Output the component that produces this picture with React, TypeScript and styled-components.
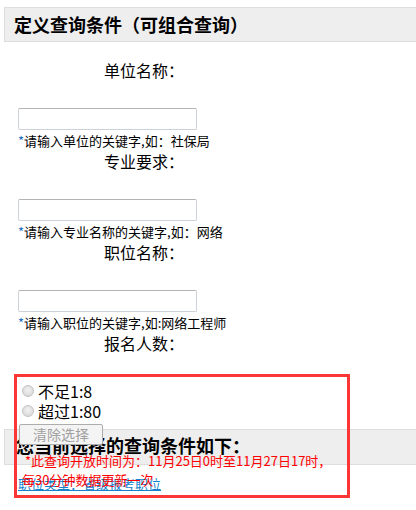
import React from "react";
import styled, { createGlobalStyle } from "styled-components";

const GlobalStyle = createGlobalStyle`
  html, body {
    margin: 0;
    padding: 0;
    background: #fff;
  }
  body {
    font-family: "Noto Sans CJK SC", "Liberation Sans", sans-serif;
    color: #000;
    overflow: hidden;
  }
`;

const Page = styled.div`
  width: 416px;
  min-height: 510px;
  box-sizing: border-box;
  padding: 7px 0 0 4px;
`;

const SectionTitle = styled.h3`
  margin: 0;
  height: 35px;
  box-sizing: border-box;
  background: #eee;
  border: 1px solid #ddd;
  border-right: none;
  padding-left: 9px;
  font-size: 18px;
  font-weight: bold;
  line-height: 32px;
  white-space: nowrap;
`;

const Form = styled.div`
  margin-top: 18px;
`;

const Field = styled.div`
  display: flex;
  flex-direction: column;
  align-items: flex-start;
`;

const Label = styled.div<{ $gap?: number }>`
  width: 280px;
  height: ${(p) => p.$gap ?? 48}px;
  text-align: center;
  font-size: 16px;
  line-height: 20px;
`;

const TextInput = styled.input`
  margin: 0 0 0 14px;
  width: 179px;
  height: 22px;
  box-sizing: border-box;
  border: 1px solid #cdd1d8;
  border-top-color: #b4b4b4;
  border-radius: 2px;
  padding: 0 3px;
  outline: none;
`;

const Hint = styled.div`
  padding-left: 14px;
  font-size: 13px;
  line-height: 21px;
  white-space: nowrap;
`;

const Star = styled.span`
  color: #1a6fc2;
`;

const Result = styled.div`
  position: relative;
  margin-top: 21px;
  padding-top: 7px;
  height: 124px;
`;

const RadioGroup = styled.div`
  position: relative;
  z-index: 1;
  height: 48px;
  padding-left: 18px;
`;

const RadioRow = styled.label`
  display: flex;
  align-items: center;
  gap: 4px;
  height: 20px;
  font-size: 16px;
  white-space: nowrap;
`;

const Radio = styled.input`
  appearance: none;
  margin: 0;
  width: 12px;
  height: 12px;
  border-radius: 50%;
  border: 1px solid #c4c4c4;
  background: radial-gradient(circle at 50% 40%, #f2f2f2, #d2d2d2);
`;

const ClearButton = styled.button`
  margin: 1px 0 0 -3px;
  height: 21px;
  padding: 0 13px;
  font-family: inherit;
  font-size: 14px;
  line-height: 19px;
  color: #a0a0a0;
  background: #f4f4f4;
  border: 1px solid #adadad;
  border-radius: 2px;
`;

const CurrentTitle = styled(SectionTitle)`
  height: 36px;
  padding-left: 11px;
  line-height: 30px;
`;

const Notice = styled.div`
  position: absolute;
  top: 77px;
  left: 18px;
  color: #ff0000;
  font-size: 13px;
  line-height: 19px;
  white-space: nowrap;
`;

const TypeLink = styled.a`
  display: inline-block;
  margin: 10px 0 0 14px;
  color: #1583cf;
  font-size: 13px;
  line-height: 17px;
  text-decoration: underline;
  white-space: nowrap;
`;

const Highlight = styled.div`
  position: absolute;
  z-index: 2;
  top: 0;
  left: 10px;
  width: 336px;
  height: 124px;
  box-sizing: border-box;
  border: 3px solid #fc3535;
  pointer-events: none;
`;

const fields = [
  { label: "单位名称：", hint: "请输入单位的关键字,如：社保局" },
  { label: "专业要求：", hint: "请输入专业名称的关键字,如：网络" },
  { label: "职位名称：", hint: "请输入职位的关键字,如:网络工程师" },
];

export default function App() {
  return (
    <>
      <GlobalStyle />
      <Page>
        <SectionTitle>定义查询条件（可组合查询）</SectionTitle>
        <Form>
          {fields.map((f) => (
            <Field key={f.label}>
              <Label>{f.label}</Label>
              <TextInput type="text" />
              <Hint>
                <Star>*</Star>
                {f.hint}
              </Hint>
            </Field>
          ))}
          <Label $gap={20}>报名人数：</Label>
        </Form>
        <Result>
          <RadioGroup>
            <RadioRow>
              <Radio type="radio" name="ratio" />
              不足1:8
            </RadioRow>
            <RadioRow>
              <Radio type="radio" name="ratio" />
              超过1:80
            </RadioRow>
            <ClearButton disabled>清除选择</ClearButton>
          </RadioGroup>
          <CurrentTitle>您当前选择的查询条件如下：</CurrentTitle>
          <TypeLink href="#">职位类型：省级报考职位</TypeLink>
          <Notice>
            &nbsp;*此查询开放时间为：11月25日0时至11月27日17时，
            <br />
            每30分钟数据更新一次
          </Notice>
          <Highlight />
        </Result>
      </Page>
    </>
  );
}
